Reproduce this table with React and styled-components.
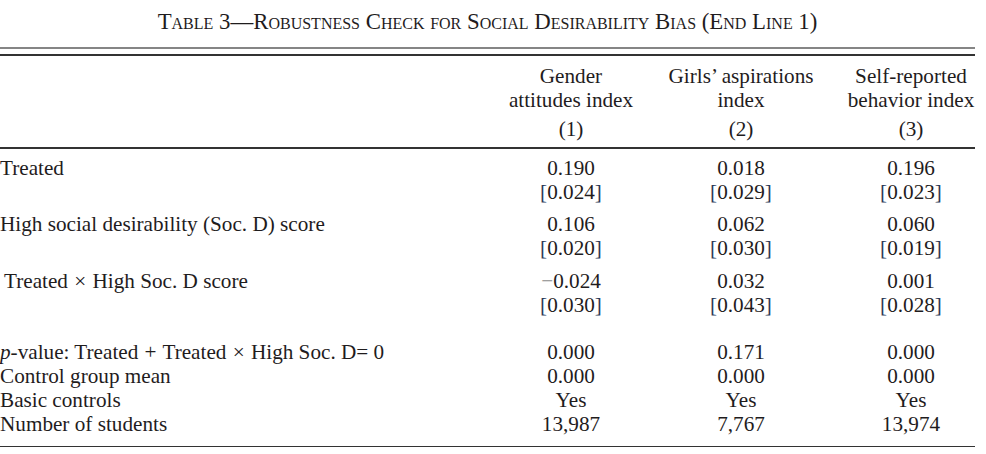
import React from 'react'
import styled, { createGlobalStyle } from 'styled-components'

const GlobalStyle = createGlobalStyle`
  body {
    margin: 0;
    background: #fff;
    color: #1f1c1d;
    font-family: 'Liberation Serif', 'Times New Roman', serif;
  }
`

const Page = styled.div`
  width: 986px;
  height: 454px;
  overflow: hidden;
`

const Title = styled.div`
  width: 975px;
  padding-top: 10px;
  text-align: center;
  font-size: 22.8px;
  line-height: 24px;
  font-variant: small-caps;
`

const DoubleRule = styled.div`
  width: 975px;
  margin-top: 13px;
  height: 2px;
  background: #858585;
  margin-bottom: 7px;
  &::after {
    content: '';
    display: block;
    height: 2px;
    background: #333;
    transform: translateY(7px);
  }
`

const Rule = styled.div`
  width: 975px;
  height: 1.5px;
  background: #333;
  margin-top: ${p => p.$top || 0}px;
`

const Grid = styled.div`
  display: grid;
  grid-template-columns: 486px 170px 170px 170px;
  font-size: 21.2px;
  line-height: 24px;
  margin-top: ${p => p.$top || 0}px;
  row-gap: ${p => p.$gap || 0}px;
`

const Label = styled.div`
  white-space: nowrap;
  padding-left: ${p => p.$indent || 0}px;
`

const Cell = styled.div`
  text-align: center;
  white-space: nowrap;
`

const HeadCell = styled.div`
  text-align: center;
  white-space: nowrap;
  display: flex;
  flex-direction: column;
`

const ColNum = styled.span`
  margin-top: 5px;
`

const Bracket = styled.span`
  color: #2d3a58;
`

const Minus = styled.span`
  color: #8a8a8a;
`

const Op = styled.span`
  padding: 0 1px;
`

const headers = [
  ['Gender', 'attitudes index', '(1)'],
  ['Girls\u2019 aspirations', 'index', '(2)'],
  ['Self-reported', 'behavior index', '(3)']
]

const coefRows = [
  { label: 'Treated', values: ['0.190', '0.018', '0.196'], se: ['0.024', '0.029', '0.023'] },
  { label: 'High social desirability (Soc. D) score', values: ['0.106', '0.062', '0.060'], se: ['0.020', '0.030', '0.019'] },
  { label: <>Treated <Op>{'\u00d7'}</Op> High Soc. D score</>, indent: 4, values: ['\u22120.024', '0.032', '0.001'], se: ['0.030', '0.043', '0.028'] }
]

const statRows = [
  { label: <><i>p</i>-value: Treated <Op>+</Op> Treated <Op>{'\u00d7'}</Op> High Soc. D= 0</>, values: ['0.000', '0.171', '0.000'] },
  { label: 'Control group mean', values: ['0.000', '0.000', '0.000'] },
  { label: 'Basic controls', values: ['Yes', 'Yes', 'Yes'] },
  { label: 'Number of students', values: ['13,987', '7,767', '13,974'] }
]

const Value = ({ v }) =>
  v.startsWith('\u2212') ? <><Minus>{'\u2212'}</Minus>{v.slice(1)}</> : v

const CoefBlock = ({ label, indent, values, se }) => (
  <>
    <Label $indent={indent}>{label}</Label>
    {values.map((v, i) => (
      <Cell key={i}>
        <Value v={v} />
        <br />
        <Bracket>[</Bracket>{se[i]}<Bracket>]</Bracket>
      </Cell>
    ))}
  </>
)

export default function App () {
  return (
    <Page>
      <GlobalStyle />
      <Title>Table 3—Robustness Check for Social Desirability Bias (End Line 1)</Title>
      <DoubleRule />
      <Grid $top={15}>
        <div />
        {headers.map((h, i) => (
          <HeadCell key={i}>
            <span>{h[0]}</span>
            <span>{h[1]}</span>
            <ColNum>{h[2]}</ColNum>
          </HeadCell>
        ))}
      </Grid>
      <Rule $top={6} />
      <Grid $top={7} $gap={8.5}>
        {coefRows.map((r, i) => <CoefBlock key={i} {...r} />)}
      </Grid>
      <Grid $top={23}>
        {statRows.map((r, i) => (
          <React.Fragment key={i}>
            <Label>{r.label}</Label>
            {r.values.map((v, j) => <Cell key={j}>{v}</Cell>)}
          </React.Fragment>
        ))}
      </Grid>
      <Rule $top={10} />
    </Page>
  )
}
